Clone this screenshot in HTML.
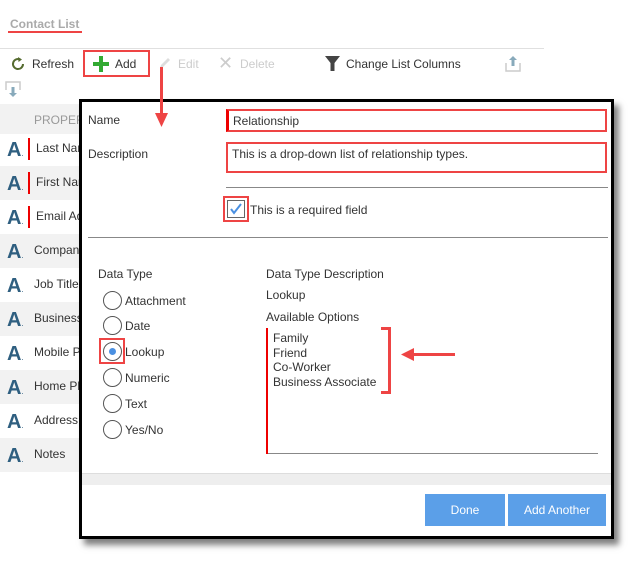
<!DOCTYPE html>
<html><head><style>
*{margin:0;padding:0;box-sizing:border-box}
body{width:633px;height:562px;background:#fff;font-family:"Liberation Sans",sans-serif;font-size:12px;color:#333;position:relative;overflow:hidden}
.a{position:absolute}
.row{position:absolute;left:0;width:80px;height:34px}
.row .A{position:absolute;left:7px;top:7px;font-size:20px;font-weight:bold;color:#2f5f80}
.row .A:after{content:".";font-size:8px;font-weight:normal;color:#2f5f80}
.row .t{position:absolute;left:34px;top:9px;font-size:12px;color:#333;white-space:nowrap}
.row .r{position:absolute;left:28px;top:6px;width:2px;height:22px;background:#e00}
.rad{position:absolute;width:19px;height:19px;border:1px solid #555;border-radius:50%;background:#fff}
.rl{position:absolute;font-size:12px;color:#333}
</style></head><body>
<div class="a" style="left:10px;top:17px;font-size:12px;font-weight:bold;color:#aaa">Contact List</div>
<div class="a" style="left:8px;top:31px;width:74px;height:2px;background:#e44"></div>
<div class="a" style="left:0;top:48px;width:544px;height:1px;background:#e0e0e0"></div>
<svg class="a" style="left:10px;top:56px" width="16" height="16" viewBox="0 0 16 16"><path d="M13 8a5 5 0 1 1-2.5-4.3" fill="none" stroke="#556b2f" stroke-width="2"/><path d="M8 1l4 2.5-3.5 2.5z" fill="#556b2f"/></svg>
<div class="a" style="left:32px;top:57px">Refresh</div>
<div class="a" style="left:83px;top:50px;width:67px;height:27px;border:2px solid #e44"></div>
<div class="a" style="left:93px;top:62px;width:16px;height:4px;background:#3a3"></div>
<div class="a" style="left:99px;top:56px;width:4px;height:16px;background:#3a3"></div>
<div class="a" style="left:115px;top:57px">Add</div>
<svg class="a" style="left:158px;top:56px" width="14" height="14"><path d="M2 12l1-3 7-7 2 2-7 7z" fill="#ddd"/></svg>
<div class="a" style="left:178px;top:57px;color:#ccc">Edit</div>
<div class="a" style="left:218px;top:53px;font-size:18px;color:#ccc">✕</div>
<div class="a" style="left:240px;top:57px;color:#ccc">Delete</div>
<svg class="a" style="left:325px;top:56px" width="16" height="16"><path d="M0 0h15l-5.5 7v8h-4V7z" fill="#444"/></svg>
<div class="a" style="left:346px;top:57px">Change List Columns</div>
<svg class="a" style="left:505px;top:55px" width="16" height="17"><path d="M1 8v8h14V8" fill="none" stroke="#ccc" stroke-width="1.5"/><path d="M8 1l-4 4h2.5v6h3V5H12z" fill="#8ab"/></svg>
<svg class="a" style="left:5px;top:81px" width="16" height="17"><path d="M1 9V1h14v8" fill="none" stroke="#ccc" stroke-width="1.5"/><path d="M8 16l-4-4h2.5V6h3v6H12z" fill="#8ab"/></svg>
<div class="a" style="left:0;top:104px;width:80px;height:30px;background:#f2f2f2"></div>
<div class="a" style="left:34px;top:113px;color:#999">PROPER</div>
<div class="row" style="top:132px"><span class="A">A</span><span class="r"></span><span class="t" style="left:36px">Last Name</span></div>
<div class="row" style="top:166px;background:#f2f2f2"><span class="A">A</span><span class="r"></span><span class="t" style="left:36px">First Name</span></div>
<div class="row" style="top:200px"><span class="A">A</span><span class="r"></span><span class="t" style="left:36px">Email Addr</span></div>
<div class="row" style="top:234px;background:#f2f2f2"><span class="A">A</span><span class="t">Company</span></div>
<div class="row" style="top:268px"><span class="A">A</span><span class="t">Job Title</span></div>
<div class="row" style="top:302px;background:#f2f2f2"><span class="A">A</span><span class="t">Business</span></div>
<div class="row" style="top:336px"><span class="A">A</span><span class="t">Mobile Ph</span></div>
<div class="row" style="top:370px;background:#f2f2f2"><span class="A">A</span><span class="t">Home Ph</span></div>
<div class="row" style="top:404px"><span class="A">A</span><span class="t">Address</span></div>
<div class="row" style="top:438px;background:#f2f2f2"><span class="A">A</span><span class="t">Notes</span></div>

<div class="a" style="left:79px;top:99px;width:535px;height:440px;border:3px solid #000;background:#fff;box-shadow:5px 6px 6px rgba(0,0,0,.5)">
</div>
<div class="a" style="left:82px;top:473px;width:529px;height:12px;background:#eee;border-top:1px solid #ddd"></div>
<div class="a" style="left:160px;top:67px;width:3px;height:50px;background:#e44"></div>
<svg class="a" style="left:155px;top:113px" width="13" height="14"><path d="M0 0h13L6.5 14z" fill="#e44"/></svg>
<div class="a" style="left:88px;top:113px">Name</div>
<div class="a" style="left:88px;top:147px">Description</div>
<div class="a" style="left:226px;top:109px;width:381px;height:23px;border:2px solid #e44;border-left:3px solid #e00"></div>
<div class="a" style="left:233px;top:114px">Relationship</div>
<div class="a" style="left:226px;top:142px;width:381px;height:31px;border:2px solid #e44"></div>
<div class="a" style="left:232px;top:147px">This is a drop-down list of relationship types.</div>
<div class="a" style="left:226px;top:187px;width:382px;height:1px;background:#888"></div>
<div class="a" style="left:223px;top:196px;width:26px;height:26px;border:2px solid #e44"></div>
<div class="a" style="left:227px;top:200px;width:18px;height:18px;border:1px solid #666;background:#fff"></div>
<svg class="a" style="left:229px;top:202px" width="14" height="14"><path d="M2 7l3 4 7-9" fill="none" stroke="#4a90e2" stroke-width="2"/></svg>
<div class="a" style="left:250px;top:203px">This is a required field</div>
<div class="a" style="left:88px;top:237px;width:520px;height:1px;background:#888"></div>
<div class="a" style="left:98px;top:267px">Data Type</div>
<div class="rad" style="left:103px;top:291px"></div><div class="rl" style="left:125px;top:294px">Attachment</div>
<div class="rad" style="left:103px;top:316px"></div><div class="rl" style="left:125px;top:319px">Date</div>
<div class="a" style="left:99px;top:338px;width:26px;height:26px;border:2px solid #e44"></div>
<div class="rad" style="left:103px;top:342px"></div><div class="a" style="left:109px;top:348px;width:7px;height:7px;border-radius:50%;background:#4a90e2"></div><div class="rl" style="left:125px;top:345px">Lookup</div>
<div class="rad" style="left:103px;top:368px"></div><div class="rl" style="left:125px;top:371px">Numeric</div>
<div class="rad" style="left:103px;top:394px"></div><div class="rl" style="left:125px;top:397px">Text</div>
<div class="rad" style="left:103px;top:420px"></div><div class="rl" style="left:125px;top:423px">Yes/No</div>
<div class="a" style="left:266px;top:267px">Data Type Description</div>
<div class="a" style="left:266px;top:288px">Lookup</div>
<div class="a" style="left:266px;top:310px">Available Options</div>
<div class="a" style="left:266px;top:328px;width:2px;height:126px;background:#e00"></div>
<div class="a" style="left:268px;top:453px;width:330px;height:1px;background:#888"></div>
<div class="a" style="left:273px;top:331px;line-height:14.5px">Family<br>Friend<br>Co-Worker<br>Business Associate</div>
<div class="a" style="left:381px;top:327px;width:10px;height:67px;border:3px solid #e44;border-left:none"></div>
<div class="a" style="left:412px;top:353px;width:43px;height:3px;background:#e44"></div>
<svg class="a" style="left:401px;top:348px" width="13" height="13"><path d="M0 6.5L13 0v13z" fill="#e44"/></svg>
<div class="a" style="left:425px;top:494px;width:80px;height:32px;background:#5b9fe8;color:#fff;text-align:center;line-height:32px">Done</div>
<div class="a" style="left:508px;top:494px;width:98px;height:32px;background:#5b9fe8;color:#fff;text-align:center;line-height:32px">Add Another</div>
</body></html>
